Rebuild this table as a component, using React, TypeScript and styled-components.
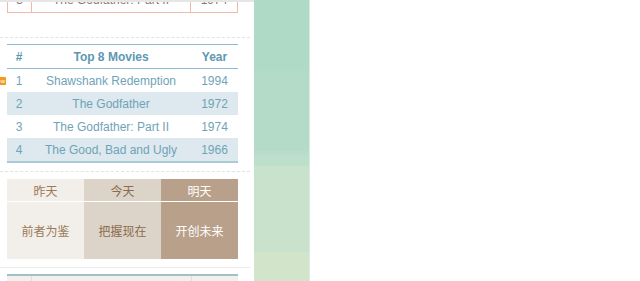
import styled, { createGlobalStyle } from "styled-components";

const GlobalStyle = createGlobalStyle`
  html, body {
    margin: 0;
    padding: 0;
    background: #fff;
  }
  body {
    font-family: "Liberation Sans", Arial, "Noto Sans CJK SC", sans-serif;
    font-size: 12px;
    overflow: hidden;
  }
`;

const movies = [
  { id: 1, title: "Shawshank Redemption", year: 1994, isNew: true },
  { id: 2, title: "The Godfather", year: 1972 },
  { id: 3, title: "The Godfather: Part II", year: 1974 },
  { id: 4, title: "The Good, Bad and Ugly", year: 1966 },
];

const tabs = [
  { title: "昨天", body: "前者为鉴", tone: "light" },
  { title: "今天", body: "把握现在", tone: "mid" },
  { title: "明天", body: "开创未来", tone: "dark" },
] as const;

const bands = [
  { h: 71, color: "#aedac6" },
  { h: 80, color: "#b4dbc8" },
  { h: 4, color: "#b9ddca" },
  { h: 11, color: "#bde0cd" },
  { h: 86, color: "#c8e2cb" },
  { h: 29, color: "#d2e4ca" },
];

const App = () => {
  return (
    <>
      <GlobalStyle />
      <Page>
        <LeftColumn>
          <TopBar />
          <Peek>
            <SalmonTable>
              <tbody>
                <tr>
                  <td className="num">3</td>
                  <td>The Godfather: Part II</td>
                  <td className="year">1974</td>
                </tr>
              </tbody>
            </SalmonTable>
          </Peek>
          <Dashed $top={24} />
          <MovieTable>
            <thead>
              <tr>
                <th className="num">#</th>
                <th>Top 8 Movies</th>
                <th className="year">Year</th>
              </tr>
            </thead>
            <tbody>
              {movies.map((m) => (
                <tr key={m.id}>
                  <td className="num">
                    {m.isNew && <NewBadge>new</NewBadge>}
                    {m.id}
                  </td>
                  <td>{m.title}</td>
                  <td className="year">{m.year}</td>
                </tr>
              ))}
            </tbody>
          </MovieTable>
          <Dashed $top={8} />
          <Tabs>
            {tabs.map((t) => (
              <TabCol key={t.title} $tone={t.tone}>
                <TabHead>{t.title}</TabHead>
                <TabBody>{t.body}</TabBody>
              </TabCol>
            ))}
          </Tabs>
          <Solid />
          <NextTable>
            <span />
            <span />
            <span />
          </NextTable>
        </LeftColumn>
        <GreenStrip>
          {bands.map((b, i) => (
            <Band key={i} style={{ height: b.h, background: b.color }} />
          ))}
        </GreenStrip>
      </Page>
    </>
  );
};

export default App;

const Page = styled.div`
  display: flex;
  width: 640px;
  height: 281px;
  overflow: hidden;
`;

const LeftColumn = styled.div`
  width: 254px;
  flex-shrink: 0;
  overflow: hidden;
  display: flex;
  flex-direction: column;

  & > * {
    flex-shrink: 0;
  }
`;

const TopBar = styled.div`
  height: 2px;
  background: #e6e6e6;
`;

const Peek = styled.div`
  height: 11px;
  overflow: hidden;
  display: flex;
  align-items: flex-end;
  padding-left: 7px;
`;

const SalmonTable = styled.table`
  width: 231px;
  border-collapse: collapse;
  color: #8a7a6a;

  td {
    height: 23px;
    border: 1px solid #f0b9a9;
    border-top: none;
    text-align: center;
    padding: 0 0 1px;
  }
  td.num {
    width: 23px;
  }
  td.year {
    width: 46px;
  }
`;

const Dashed = styled.div<{ $top: number }>`
  width: 250px;
  margin-top: ${(p) => p.$top}px;
  border-top: 1px dashed #e3e3e3;
`;

const MovieTable = styled.table`
  width: 231px;
  margin: 6px 0 0 7px;
  border-collapse: collapse;
  color: #6fa3b8;

  th,
  td {
    height: 23px;
    padding: 0;
    text-align: center;
  }
  th {
    color: #5d98b0;
    font-weight: bold;
    border-top: 1px solid #8fbccc;
    border-bottom: 1px solid #8fbccc;
  }
  .num {
    width: 24px;
    position: relative;
  }
  .year {
    width: 47px;
  }
  tbody tr:nth-child(even) {
    background: #dde9ee;
  }
  tbody tr:last-child td {
    border-bottom: 2px solid #a9cad7;
  }
`;

const NewBadge = styled.span`
  position: absolute;
  left: -13px;
  top: 8px;
  width: 11px;
  height: 8px;
  line-height: 8px;
  background: #f39a1e;
  color: #fff;
  font-size: 6px;
  text-align: right;
  padding-right: 1px;
  border-radius: 1px;
`;

const Tabs = styled.div`
  display: flex;
  margin: 7px 0 0 7px;
  width: 231px;
  font-family: "Noto Sans CJK SC", "Liberation Sans", sans-serif;
  font-size: 12px;
`;

const toneBg = { light: "#f2eee9", mid: "#ddd4c9", dark: "#b9a08a" };
const toneText = { light: "#9b7b58", mid: "#8a6b4c", dark: "#ffffff" };

const TabCol = styled.div<{ $tone: "light" | "mid" | "dark" }>`
  flex: 1;
  display: flex;
  flex-direction: column;
  gap: 1px;
  color: ${(p) => toneText[p.$tone]};

  & > div {
    background: ${(p) => toneBg[p.$tone]};
  }
`;

const TabHead = styled.div`
  height: 22px;
  display: flex;
  align-items: center;
  justify-content: center;
`;

const TabBody = styled.div`
  height: 57px;
  display: flex;
  align-items: center;
  justify-content: center;
`;

const Solid = styled.div`
  width: 250px;
  margin-top: 8px;
  border-top: 1px solid #ececec;
`;

const NextTable = styled.div`
  display: grid;
  grid-template-columns: 24px 160px 47px;
  width: 231px;
  margin: 6px 0 0 7px;
  border-top: 2px solid #9fc1cf;
  height: 20px;

  span {
    background: #f3f0ec;
    border-left: 1px solid #e2ddd6;
  }
  span:first-child {
    border-left: none;
  }
`;

const GreenStrip = styled.div`
  width: 55px;
  flex-shrink: 0;
  display: flex;
  flex-direction: column;
  border-right: 1px solid #d6ece0;
`;

const Band = styled.div`
  flex-shrink: 0;
`;
